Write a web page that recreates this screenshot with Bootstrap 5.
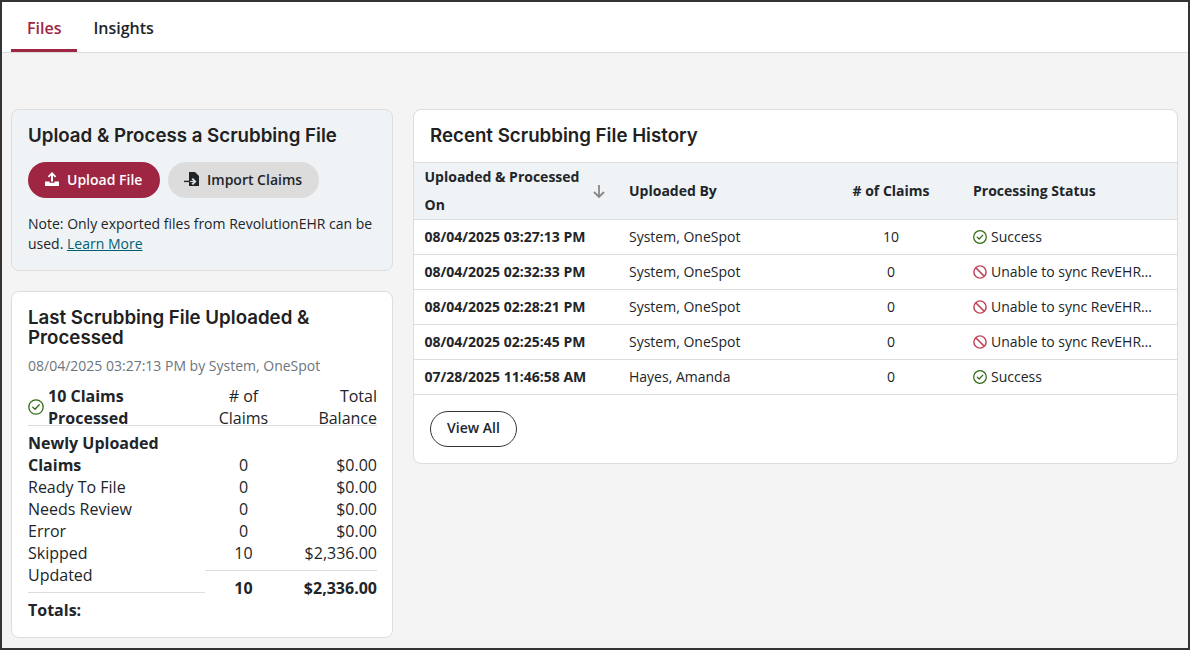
<!DOCTYPE html>
<html lang="en">
<head>
    <meta charset="UTF-8">
    <meta name="viewport" content="width=device-width, initial-scale=1.0">
    <title>Scrubbing Files</title>
    <link href="https://cdn.jsdelivr.net/npm/bootstrap@5.3.0/dist/css/bootstrap.min.css" rel="stylesheet">
    <style>
        body {
            font-family: "Open Sans", sans-serif;
            color: #212529;
            background: #f4f4f4;
        }
        .app-frame {
            height: 650px;
            overflow: hidden;
            border: 2px solid #333;
            background: #f4f4f4;
        }
        .tab-bar {
            height: 51px;
            padding-left: 9px;
            background: #fff;
            border-bottom: 1px solid #ddd;
        }
        .tab-item {
            padding: 14px 16px 0;
            height: 50px;
            font-size: 16px;
            line-height: 24px;
            font-weight: 600;
            color: #212529;
            text-decoration: none;
        }
        .tab-item.on {
            color: #9e2642;
            border-bottom: 3px solid #9e2642;
        }
        .page-body {
            padding: 56px 10px 0 9px;
            gap: 20px;
        }
        .left-col {
            width: 382px;
            gap: 20px;
        }
        .box {
            border: 1px solid #ddd;
            border-radius: 8px;
            background: #fff;
        }
        .box-tint {
            background: #eff3f6;
            padding: 16px;
            height: 162px;
        }
        .box-summary {
            padding: 16px 15px 16px 16px;
            height: 347px;
        }
        .box-history {
            flex: 1;
            height: 355px;
        }
        .head-title {
            font-family: "Inter", sans-serif;
            font-size: 18.7px;
            line-height: 20px;
            font-weight: 600;
            margin: 0;
            color: #212121;
        }
        .pill-btn {
            height: 36px;
            border-radius: 18px;
            font-size: 14px;
            font-weight: 600;
            display: inline-flex;
            align-items: center;
            gap: 8px;
            padding: 0 0 2px 17px;
            border: 0;
            white-space: nowrap;
        }
        .pill-red {
            width: 132px;
            background: #9e2642;
            color: #fff;
        }
        .pill-grey {
            width: 151px;
            padding-left: 16px;
            gap: 7px;
            background: #dcdcdc;
            color: #212529;
        }
        .pill-line {
            width: 87px;
            justify-content: center;
            padding: 0 0 2px;
            background: #fff;
            border: 1px solid #333;
            color: #212529;
        }
        .note-text {
            font-size: 14px;
            line-height: 20px;
            margin: 0;
        }
        .note-text a {
            color: #005f73;
        }
        .sub-text {
            font-size: 14px;
            line-height: 20px;
            color: #6c757d;
            margin-top: 8px;
        }
        .sum-head {
            height: 41px;
            margin-top: 9px;
            border-bottom: 1px solid #ddd;
            font-size: 16px;
            line-height: 22px;
        }
        .sum-label { width: 177px; }
        .sum-head .sum-label { height: 44px; }
        .sum-num { width: 77px; text-align: center; }
        .sum-bal { flex: 1; text-align: right; }
        .sum-body {
            font-size: 16px;
            line-height: 22px;
            padding-top: 6px;
        }
        .sum-first {
            padding-top: 22px;
        }
        .sum-total {
            border-top: 1px solid #ddd;
            margin-top: 6px;
            padding-top: 6px;
            font-weight: 700;
        }
        .hist-head {
            height: 53px;
            padding: 16px 16px 0;
            border-bottom: 1px solid #ddd;
        }
        .hist-table {
            table-layout: fixed;
            font-size: 14px;
            margin: 0;
            --bs-table-border-color: #ddd;
        }
        .hist-table th {
            background: #eff3f6;
            font-weight: 700;
            line-height: 28px;
            vertical-align: middle;
            padding: 0 11px;
            height: 56px;
        }
        .hist-table td {
            height: 35px;
            padding: 0 11px;
            vertical-align: middle;
        }
        .hist-table th:first-child,
        .hist-table td:first-child {
            padding-left: 10.5px;
        }
        .sort-wrap {
            height: 55px;
        }
        .sort-mark {
            width: 16px;
            height: 16px;
            flex: none;
            margin-left: 8.5px;
        }
        .status-line {
            display: flex;
            align-items: center;
            gap: 4px;
            white-space: nowrap;
        }
        .status-line svg { flex: none; }
    </style>
</head>
<body>
<div class="app-frame">
    <div class="tab-bar d-flex">
        <a class="tab-item on" href="#">Files</a>
        <a class="tab-item" href="#">Insights</a>
    </div>

    <div class="page-body d-flex align-items-start">
        <div class="left-col d-flex flex-column">
            <!-- Upload box -->
            <div class="box box-tint">
                <h2 class="head-title">Upload &amp; Process a Scrubbing File</h2>
                <div class="d-flex gap-2 mt-3">
                    <button class="pill-btn pill-red">
                        <svg width="14" height="14" viewBox="0 0 14 14" fill="#fff"><path d="M7 0 11.2 4.2 10 5.4 8 3.5V9.5H6V3.5L4 5.4 2.8 4.2Z"/><path d="M0 9.5h4.5v1.2h5V9.5H14V14H0Z"/></svg>
                        Upload File
                    </button>
                    <button class="pill-btn pill-grey">
                        <svg width="16" height="16" viewBox="0 0 16 16"><path fill="#212529" d="M5 1h6l4 4v10H5v-4h4.2L7.5 12.7 9 14l3.5-3.5L9 7 7.5 8.3 9.2 10H5Z"/><path fill="#212529" d="M0 9.7h6v1.4H0Z"/></svg>
                        Import Claims
                    </button>
                </div>
                <p class="note-text mt-3">Note: Only exported files from RevolutionEHR can be used. <a href="#">Learn More</a></p>
            </div>

            <!-- Last file summary -->
            <div class="box box-summary">
                <h2 class="head-title">Last Scrubbing File Uploaded &amp; Processed</h2>
                <div class="sub-text">08/04/2025 03:27:13 PM by System, OneSpot</div>
                <div class="sum-head d-flex">
                    <div class="sum-label d-flex align-items-center gap-1">
                        <svg class="flex-shrink-0" width="16" height="16" viewBox="0 0 16 16" fill="none" stroke="#2e6b10" stroke-width="1.3"><circle cx="8" cy="8" r="7.2"/><path d="M4.8 8.2 7 10.3 11.2 5.8" stroke-linecap="round" stroke-linejoin="round"/></svg>
                        <span class="fw-bold">10 Claims Processed</span>
                    </div>
                    <div class="sum-num">
                        # of Claims
                    </div>
                    <div class="sum-bal">Total Balance</div>
                </div>
                <div class="sum-body d-flex">
                    <div class="sum-label flex-shrink-0">
                        <div class="fw-bold">Newly Uploaded Claims</div>
                        <div>Ready To File</div>
                        <div>Needs Review</div>
                        <div>Error</div>
                        <div>Skipped</div>
                        <div>Updated</div>
                        <div class="sum-total">Totals:</div>
                    </div>
                    <div class="flex-grow-1">
                        <div class="d-flex sum-first"><div class="sum-num">0</div><div class="sum-bal">$0.00</div></div>
                        <div class="d-flex"><div class="sum-num">0</div><div class="sum-bal">$0.00</div></div>
                        <div class="d-flex"><div class="sum-num">0</div><div class="sum-bal">$0.00</div></div>
                        <div class="d-flex"><div class="sum-num">0</div><div class="sum-bal">$0.00</div></div>
                        <div class="d-flex"><div class="sum-num">10</div><div class="sum-bal">$2,336.00</div></div>
                        <div class="d-flex sum-total"><div class="sum-num">10</div><div class="sum-bal">$2,336.00</div></div>
                    </div>
                </div>
            </div>
        </div>

        <!-- History -->
        <div class="box box-history">
            <div class="hist-head">
                <h2 class="head-title">Recent Scrubbing File History</h2>
            </div>
            <table class="table hist-table">
                <colgroup>
                    <col style="width:204px"><col style="width:202px"><col style="width:142px"><col>
                </colgroup>
                <thead>
                    <tr>
                        <th><div class="sort-wrap d-flex align-items-center">Uploaded &amp; Processed On
                            <svg class="sort-mark" viewBox="0 0 16 16" fill="none" stroke="#888" stroke-width="1.8"><path d="M8 2v12M3 9l5 5 5-5"/></svg>
                        </div></th>
                        <th>Uploaded By</th>
                        <th class="text-center">#&nbsp;of Claims</th>
                        <th>Processing Status</th>
                    </tr>
                </thead>
                <tbody id="historyRows"></tbody>
            </table>
            <div class="ps-3 pt-3">
                <button class="pill-btn pill-line">View All</button>
            </div>
        </div>
    </div>
</div>

<script>
    const okIcon = '<svg width="14" height="14" viewBox="0 0 16 16" fill="none" stroke="#2e6b10" stroke-width="1.4"><circle cx="8" cy="8" r="7.2"/><path d="M4.8 8.2 7 10.3 11.2 5.8" stroke-linecap="round" stroke-linejoin="round"/></svg>';
    const banIcon = '<svg width="14" height="14" viewBox="0 0 16 16" fill="none" stroke="#c0485a" stroke-width="1.7"><circle cx="8" cy="8" r="7"/><path d="M3 3l10 10"/></svg>';

    const rows = [
        ['08/04/2025 03:27:13 PM', 'System, OneSpot', 10, true],
        ['08/04/2025 02:32:33 PM', 'System, OneSpot', 0, false],
        ['08/04/2025 02:28:21 PM', 'System, OneSpot', 0, false],
        ['08/04/2025 02:25:45 PM', 'System, OneSpot', 0, false],
        ['07/28/2025 11:46:58 AM', 'Hayes, Amanda', 0, true]
    ];

    const tableBody = document.getElementById('historyRows');
    rows.forEach(row => {
        const tr = document.createElement('tr');
        const status = row[3] ? okIcon + ' Success' : banIcon + ' Unable to sync RevEHR\u2026';
        tr.innerHTML = '<td class="fw-bold">' + row[0] + '</td><td>' + row[1] + '</td><td class="text-center">' + row[2] + '</td><td><div class="status-line">' + status + '</div></td>';
        tableBody.appendChild(tr);
    });
</script>

<script src="https://cdn.jsdelivr.net/npm/bootstrap@5.3.0/dist/js/bootstrap.bundle.min.js"></script>
</body>
</html>
